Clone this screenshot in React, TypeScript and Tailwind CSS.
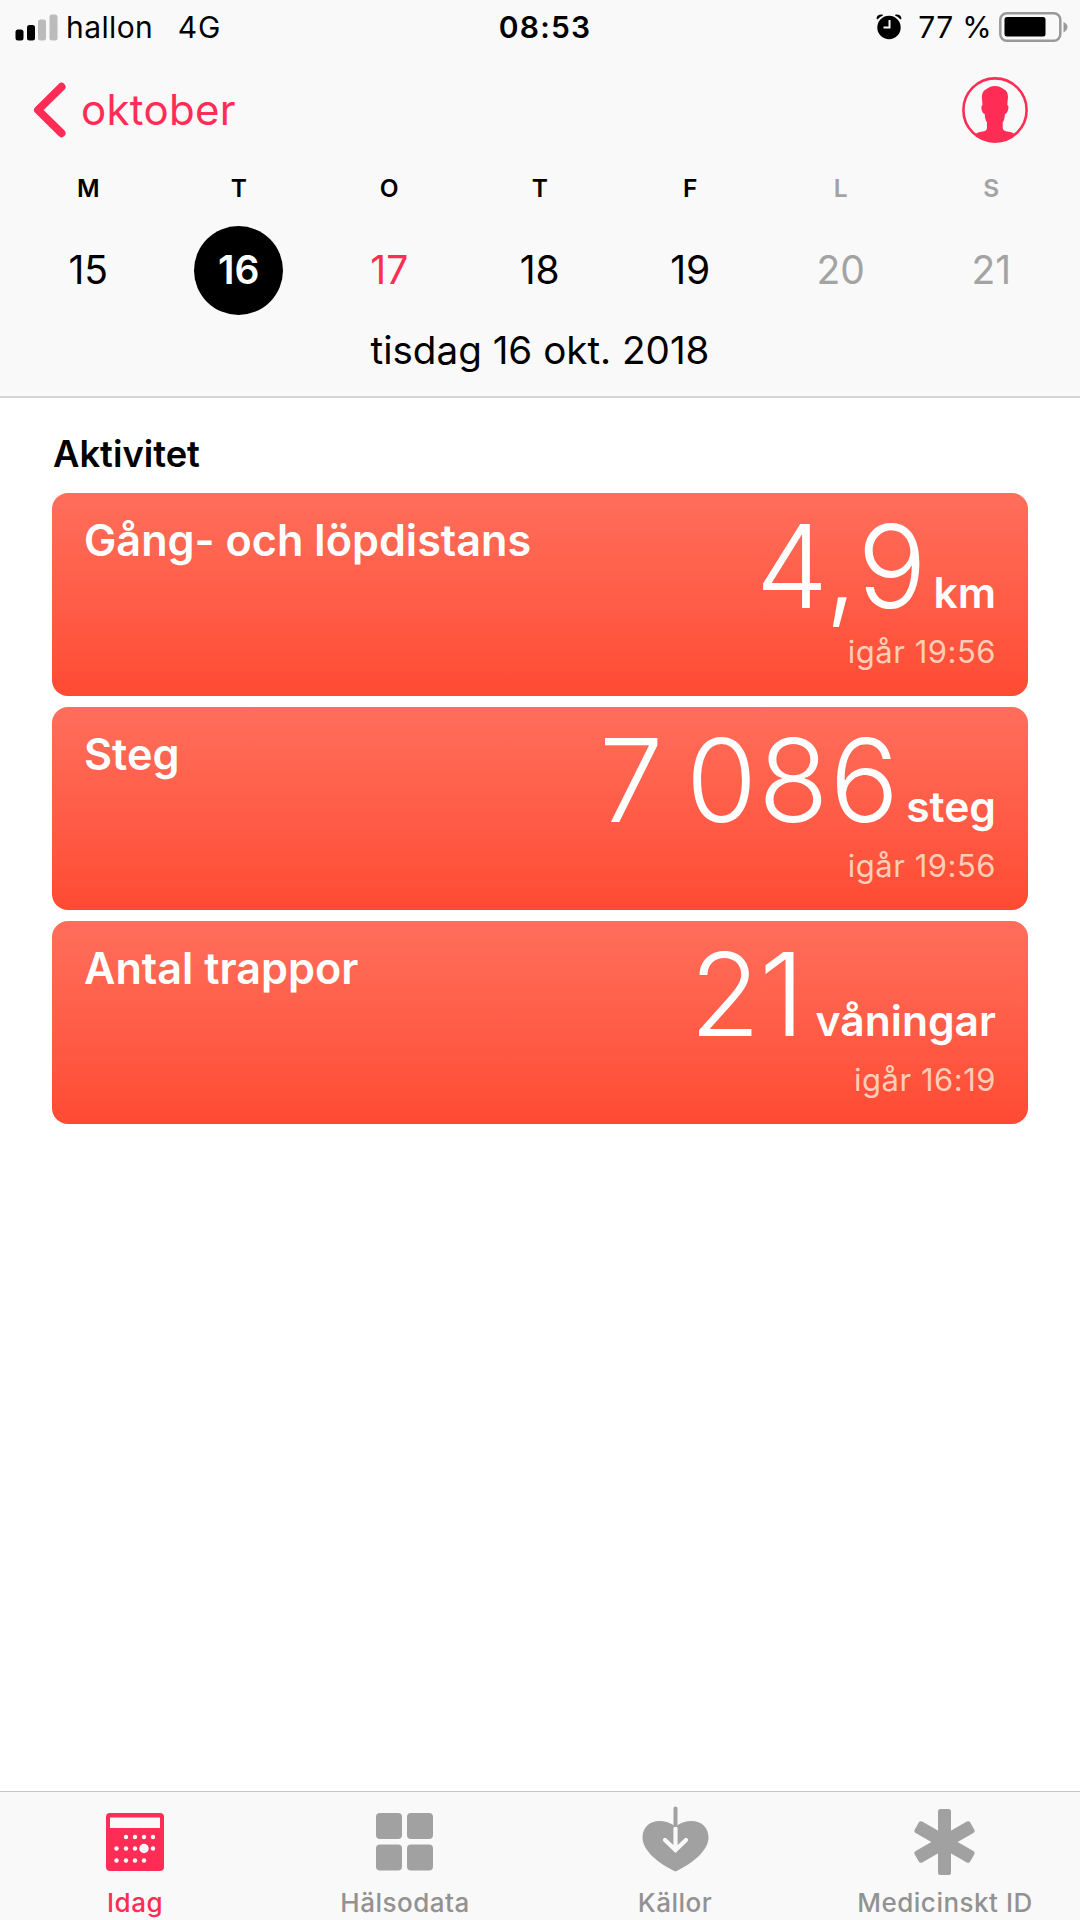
import React from "react";

type Day = { letter: string; num: number; weekend?: boolean; today?: boolean; selected?: boolean };

const DAYS: Day[] = [
  { letter: "M", num: 15 },
  { letter: "T", num: 16, selected: true },
  { letter: "O", num: 17, today: true },
  { letter: "T", num: 18 },
  { letter: "F", num: 19 },
  { letter: "L", num: 20, weekend: true },
  { letter: "S", num: 21, weekend: true },
];

const CARDS = [
  { title: "Gång- och löpdistans", value: "4,9", unit: "km", time: "igår 19:56", valueCls: "tracking-[0.8px]", unitCls: "ml-[6px]" },
  { title: "Steg", value: "7 086", unit: "steg", time: "igår 19:56", valueCls: "tracking-[1.2px] [word-spacing:-12px]", unitCls: "ml-[6px]" },
  { title: "Antal trappor", value: "21", unit: "våningar", time: "igår 16:19", valueCls: "tracking-[-1px]", unitCls: "ml-[12px]" },
];

function StatusBar() {
  return (
    <div className="h-[54px] grid grid-cols-3 items-center text-[30px] leading-none">
      <div className="flex items-center pl-[15px] tracking-[0.4px]">
        <svg width="43" height="27" viewBox="0 0 43 27">
          <rect x="0.5" y="15.5" width="8" height="11" rx="2.5" fill="#000" />
          <rect x="12" y="11" width="8" height="15.5" rx="2.5" fill="#000" />
          <rect x="23" y="5.5" width="8" height="21" rx="2.5" fill="#bbb" />
          <rect x="34.5" y="0.5" width="8" height="26" rx="2.5" fill="#bbb" />
        </svg>
        <span className="ml-[8px]">hallon</span>
        <span className="ml-[24.5px] tracking-[0.8px]">4G</span>
      </div>
      <div className="pl-[10px] text-center font-semibold text-[30px] tracking-[1.2px]">08:53</div>
      <div className="flex items-center justify-end pr-[12px]">
        <svg width="26" height="26" viewBox="0 0 26 26">
          <circle cx="13" cy="13.500" r="11.700" fill="#000" />
          <path d="M0.500 4.500 Q1 0 6.500 0.500 L7 1.500 Q4 2.500 1.500 5.500 Z M25.500 4.500 Q25 0 19.500 0.500 L19 1.500 Q22 2.500 24.500 5.500 Z" fill="#000" />
          <path d="M13.500 6 V13.500 H7.500" stroke="#f9f9f9" strokeWidth="2" fill="none" />
        </svg>
        <span className="ml-[16px] tracking-[0.3px]">77 %</span>
        <svg className="ml-[7px]" width="69" height="30" viewBox="0 0 69 30">
          <rect x="1.3" y="1.3" width="60" height="27.4" rx="6.5" fill="none" stroke="#999" strokeWidth="2.5" />
          <rect x="5.5" y="5" width="41" height="19.5" rx="2.5" fill="#000" />
          <path d="M64.500 10 Q68.500 12 68.500 15 Q68.500 18 64.500 20.500 Z" fill="#999" />
        </svg>
      </div>
    </div>
  );
}

function Header() {
  return (
    <header className="h-[398px] shrink-0 bg-[#f9f9f9] border-b-2 border-[#d5d5d6]">
      <StatusBar />
      <div className="h-[112px] flex items-center justify-between pl-[33px] pr-[52px]">
        <button className="flex items-center text-[#ff2d55]">
          <svg width="33" height="56" viewBox="0 0 33 56" fill="none" stroke="currentColor" strokeWidth="8" strokeLinecap="round" strokeLinejoin="round">
            <path d="M28.500 4.800 L5 28 L28.500 51.200" />
          </svg>
          <span className="ml-[15px] text-[42px] leading-none tracking-[0.3px]">oktober</span>
        </button>
        <svg width="66" height="66" viewBox="0 0 66 66">
          <circle cx="33" cy="33" r="31.6" fill="none" stroke="#ff2d55" strokeWidth="2.6" />
          <path
            fill="#ff2d55"
            d="M33 9 C37 9 39.500 10.500 41.500 12 Q46 14 46 20 L45.300 28 Q47 28.500 46.200 32 Q45.500 36.500 43 37 Q42.500 43 40.700 45.500 L40.700 50 Q40.500 53.500 44 54.300 Q50 55 53 57 A31.500 31.500 0 0 1 13 57 Q16 55 22 54.300 Q25.300 53.500 25 50 L25 45.500 Q23 43 22.700 37 Q20.300 36.500 19.500 32 Q19 28.500 20.500 28 L19.800 20 Q20 14 24.500 12 C26.500 10.500 29 9 33 9 Z"
          />
        </svg>
      </div>
      <div className="flex pl-[13px]">
        {DAYS.map((d) => (
          <div key={d.num} className={`w-[150.5px] shrink-0 flex flex-col items-center ${d.weekend ? "text-[#a3a3a3]" : "text-black"}`}>
            <span className="h-[44px] flex items-center text-[24.5px] font-semibold leading-none">{d.letter}</span>
            <span
              className={`mt-[16px] size-[89px] pb-[2px] rounded-full flex items-center justify-center text-[39px] leading-none ${
                d.selected ? "bg-black text-white font-semibold" : d.today ? "text-[#ff2d55]" : ""
              }`}
            >
              {d.num}
            </span>
          </div>
        ))}
      </div>
      <div className="mt-[13px] text-center text-[38.6px] leading-[44px]">tisdag 16 okt. 2018</div>
    </header>
  );
}

function HealthCard({ card }: { card: (typeof CARDS)[number] }) {
  return (
    <div className="h-[203px] rounded-[16px] bg-linear-to-b from-[#ff6e5b] to-[#ff4a32] text-white flex justify-between px-[32px]">
      <h3 className="mt-[21px] text-[43.2px] leading-[52px] font-semibold whitespace-nowrap">{card.title}</h3>
      <div className="flex flex-col items-end">
        <div className="mt-[14px] h-[120px] flex items-baseline whitespace-pre">
          <span className={`text-[115px] leading-[120px] font-light ${card.valueCls}`}>{card.value}</span>
          <span className={`text-[42.6px] font-semibold ${card.unitCls}`}>{card.unit}</span>
        </div>
        <span className="mt-[5px] text-[31px] leading-[40px] tracking-[0.5px] text-[#ffccb8]">{card.time}</span>
      </div>
    </div>
  );
}

const CAL_DOTS = [
  [20, 24], [29, 24], [38, 24], [47, 24],
  [10.5, 35.5], [20, 35.5], [29, 35.5], [47, 35.5],
  [10.5, 47.5], [20, 47.5], [29, 47.5], [38, 47.5],
];

function CalendarIcon() {
  return (
    <svg width="58" height="58" viewBox="0 0 58 58">
      <rect width="58" height="58" rx="4" fill="#ff2d55" />
      <rect x="4" y="4.5" width="50" height="10.5" fill="#f9f9f9" />
      {CAL_DOTS.map(([x, y]) => (
        <circle key={`${x}-${y}`} cx={x} cy={y} r="2.2" fill="#f9f9f9" />
      ))}
      <circle cx="38" cy="35.5" r="4.7" fill="#f9f9f9" />
    </svg>
  );
}

function GridIcon() {
  return (
    <svg width="58" height="58" viewBox="0 0 58 58" fill="#a1a1a1">
      <rect x="0" y="0" width="26" height="26" rx="4" />
      <rect x="31" y="0" width="26" height="26" rx="4" />
      <rect x="0" y="31.5" width="26" height="26" rx="4" />
      <rect x="31" y="31.5" width="26" height="26" rx="4" />
    </svg>
  );
}

function SourcesIcon() {
  return (
    <svg className="overflow-visible" width="66" height="66" viewBox="-0.5 2.5 66 66" fill="none" strokeLinecap="round">
      <path d="M33 20 C28 16 22 14.500 17 14.500 C7 14.500 0 21 0 31 C0 44 16 57 33 65 C50 57 66 44 66 31 C66 21 59 14.500 49 14.500 C44 14.500 38 16 33 20 Z" fill="#a1a1a1" />
      <path d="M33 22 V42 M22.500 33.500 L33 43.500 L43.500 33.500" stroke="#f9f9f9" strokeWidth="4.2" />
      <path d="M33 2 V18.500" stroke="#a1a1a1" strokeWidth="4" />
    </svg>
  );
}

function MedicalIcon() {
  return (
    <svg width="66" height="66" viewBox="0.5 0 66 66" fill="#a1a1a1">
      <rect x="26.5" y="0" width="13" height="66" rx="2.5" />
      <rect x="26.5" y="1" width="13" height="64" rx="2.5" transform="rotate(60 33 33)" />
      <rect x="26.5" y="1" width="13" height="64" rx="2.5" transform="rotate(120 33 33)" />
    </svg>
  );
}

const TABS = [
  { label: "Idag", icon: <CalendarIcon />, cls: "text-[#ff2d55]" },
  { label: "Hälsodata", icon: <GridIcon />, cls: "text-[#929292]" },
  { label: "Källor", icon: <SourcesIcon />, cls: "text-[#929292]" },
  { label: "Medicinskt ID", icon: <MedicalIcon />, cls: "text-[#929292]" },
];

export default function App() {
  return (
    <div className="w-[1080px] h-[1920px] bg-white text-black flex flex-col overflow-hidden font-['Inter',sans-serif]">
      <Header />

      <main className="flex-1 px-[52px]">
        <h2 className="mt-[32px] mb-[15px] pl-[1px] text-[36.3px] leading-[48px] font-semibold">Aktivitet</h2>
        <div className="flex flex-col gap-[11px]">
          {CARDS.map((c) => (
            <HealthCard key={c.title} card={c} />
          ))}
        </div>
      </main>

      <nav className="h-[129px] shrink-0 bg-[#f9f9f9] border-t border-[#c5c5c6] grid grid-cols-4">
        {TABS.map((t) => (
          <div key={t.label} className={`flex flex-col items-center ${t.cls}`}>
            <div className="mt-[17px] h-[66px] flex items-center">{t.icon}</div>
            <span className="mt-[12px] text-[26px] leading-[32px] font-medium tracking-[0.5px] whitespace-nowrap">{t.label}</span>
          </div>
        ))}
      </nav>
    </div>
  );
}
